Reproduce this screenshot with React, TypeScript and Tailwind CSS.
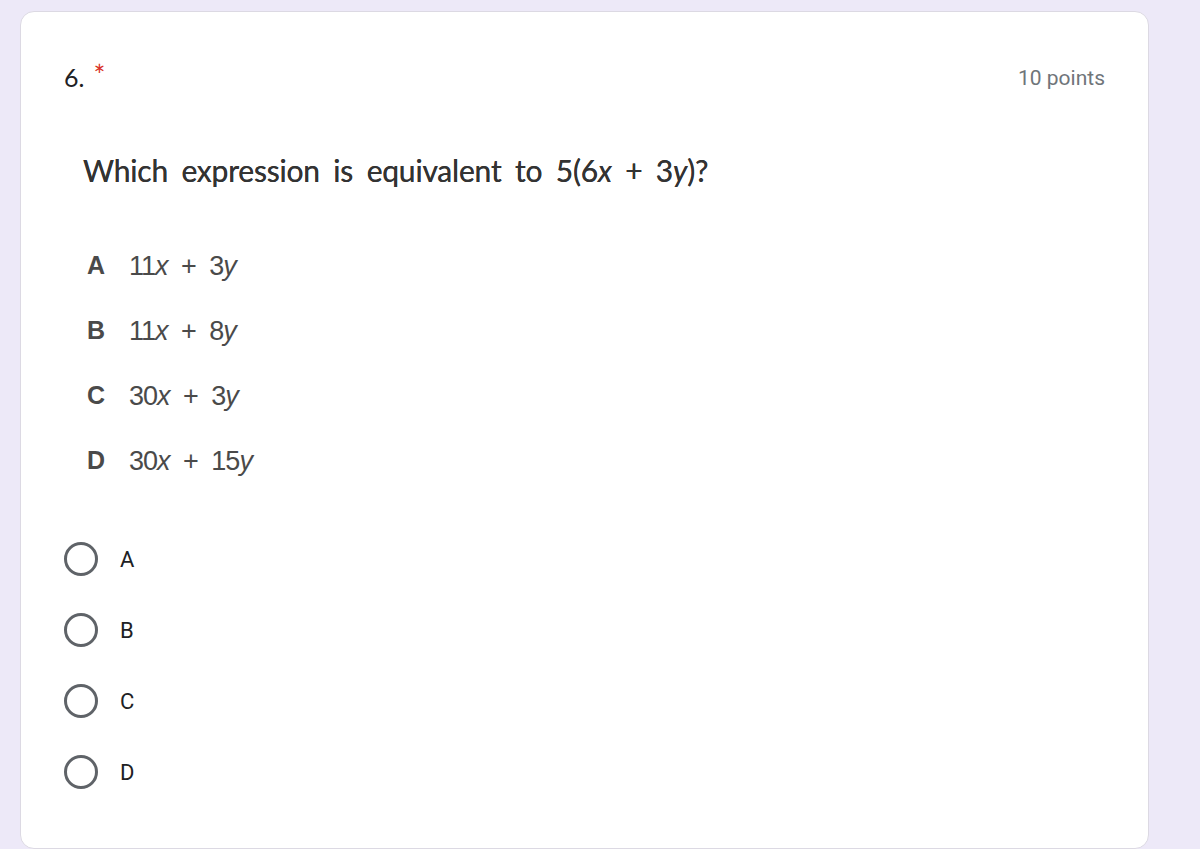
import React from 'react';

const choices = [
  { letter: 'A', coef: '11', var1: 'x', coef2: '3', var2: 'y' },
  { letter: 'B', coef: '11', var1: 'x', coef2: '8', var2: 'y' },
  { letter: 'C', coef: '30', var1: 'x', coef2: '3', var2: 'y' },
  { letter: 'D', coef: '30', var1: 'x', coef2: '15', var2: 'y' },
];

const radios = ['A', 'B', 'C', 'D'];

// Question image area (the pasted worksheet snippet)
const QuestionImage = () => (
  <div className="ml-[19px] mt-[55px]">
    <p
      className="text-[30px] leading-[40px] text-[#333333] tracking-[-0.2px] [word-spacing:6px] [text-shadow:0_0_0.4px_#333]"
      style={{ fontFamily: 'Lato, "Open Sans", sans-serif' }}
    >
      Which expression is equivalent to 5(6<i>x</i> + 3<i>y</i>)?
    </p>
    <div className="mt-[60px] flex flex-col gap-[33px] pl-[4px]">
      {choices.map((c) => (
        <div key={c.letter} className="flex items-center h-[32px]" style={{ fontFamily: '"Liberation Sans", Arial, sans-serif' }}>
          <span className="w-[42px] text-[25px] font-bold text-[#4a4a4a]">{c.letter}</span>
          <span className="text-[27px] text-[#4a4a4a] tracking-[-1px] [word-spacing:7px]">
            {c.coef}<i>{c.var1}</i> + {c.coef2}<i>{c.var2}</i>
          </span>
        </div>
      ))}
    </div>
  </div>
);

export default function App() {
  return (
    <div className="min-h-screen bg-[#ede9f8] pt-[11px] pl-[20px] pr-[51px] overflow-hidden">
      <div className="h-[838px] bg-white rounded-[14px] border border-[#dcd9e3] pl-[43px] pr-[43px] pt-[47px]">
        {/* Header */}
        <div className="flex items-start justify-between">
          <div className="flex items-start" style={{ fontFamily: 'Lato, "Open Sans", sans-serif' }}>
            <span className="text-[25px] leading-[36px] text-[#202124]">6.</span>
            <span className="ml-[9px] text-[28px] leading-[32px] text-[#d93025]">*</span>
          </div>
          <span
            className="mt-[3px] text-[21px] leading-[32px] text-[#70757a]"
            style={{ fontFamily: 'Roboto, sans-serif' }}
          >
            10 points
          </span>
        </div>

        <QuestionImage />

        {/* Radio options */}
        <div className="mt-[65px] flex flex-col gap-[37px]" style={{ fontFamily: 'Roboto, sans-serif' }}>
          {radios.map((r) => (
            <div key={r} className="flex items-center h-[34px]">
              <div className="w-[34px] h-[34px] rounded-full border-[3px] border-[#5f6368]" />
              <span className="ml-[22px] text-[22px] text-[#202124]">{r}</span>
            </div>
          ))}
        </div>
      </div>
    </div>
  );
}
